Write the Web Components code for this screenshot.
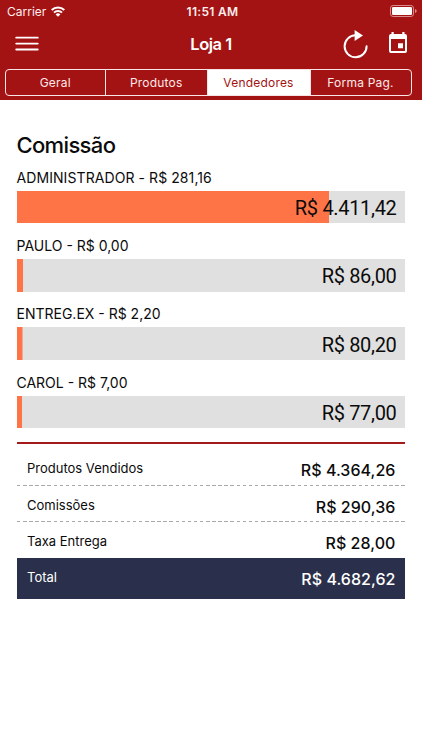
<!DOCTYPE html>
<html lang="pt-BR">
<head>
<meta charset="utf-8">
<title>Loja 1</title>
<style>
	body {
		margin: 0;
		background: #fff;
		color: #0b0b0b;
		font-family: Inter, "Liberation Sans", sans-serif;
	}

	main {
		padding: 31px 17px 0 16.5px;
	}

	h1 {
		margin: 0 0 6px;
		font-size: 22px;
		line-height: 28px;
		font-weight: 500;
		letter-spacing: -0.65px;
	}

	.wide {
		letter-spacing: 0.08px;
	}
</style>
</head>
<body>
<app-header>
	<status-bar carrier="Carrier" time="11:51 AM"></status-bar>
	<nav-bar>Loja 1</nav-bar>
	<segment-group>
		<segment-item>Geral</segment-item>
		<segment-item>Produtos</segment-item>
		<segment-item active>Vendedores</segment-item>
		<segment-item>Forma Pag.</segment-item>
	</segment-group>
</app-header>
<main>
	<h1>Comissão</h1>
	<seller-bar class="wide" value="R$ 4.411,42" fill="312px">ADMINISTRADOR - R$ 281,16</seller-bar>
	<seller-bar value="R$ 86,00" fill="6px">PAULO - R$ 0,00</seller-bar>
	<seller-bar value="R$ 80,20" fill="5.5px">ENTREG.EX - R$ 2,20</seller-bar>
	<seller-bar value="R$ 77,00" fill="5.2px">CAROL - R$ 7,00</seller-bar>
	<summary-list>
		<summary-row value="R$ 4.364,26">Produtos Vendidos</summary-row>
		<summary-row value="R$ 290,36">Comissões</summary-row>
		<summary-row value="R$ 28,00" plain>Taxa Entrega</summary-row>
		<summary-row value="R$ 4.682,62" total>Total</summary-row>
	</summary-list>
</main>

<script>
// red block on top that holds the status bar, the title and the tabs
class AppHeader extends HTMLElement {
	constructor() {
		super();
		this.attachShadow({ mode: 'open' });
		this.shadowRoot.innerHTML = `
		<style>
			:host {
				display: flex;
				flex-direction: column;
				box-sizing: border-box;
				height: 100px;
				background: #a41313;
				color: #fff;
			}
		</style>
		<slot></slot>
		`;
	}
}

class StatusBar extends HTMLElement {
	constructor() {
		super();
		this.attachShadow({ mode: 'open' });
		this.shadowRoot.innerHTML = `
		<style>
			:host {
				display: grid;
				grid-template-columns: 1fr auto 1fr;
				align-items: center;
				height: 22px;
				padding: 0 4px 0 7px;
				font-size: 12px;
				color: #fbeeee;
			}
			.left {
				display: flex;
				align-items: center;
				gap: 5px;
			}
			.time {
				font-weight: 600;
				letter-spacing: 0.3px;
			}
			.battery {
				justify-self: end;
				margin-top: -1px;
			}
			svg {
				display: block;
			}
		</style>
		<div class="left">
			<span>${this.getAttribute('carrier')}</span>
			<svg width="14" height="11" viewBox="0 0 14 11" fill="none" stroke="#fff" stroke-width="2">
				<path d="M.7 4a9 9 0 0 1 12.6 0M3 6.6a5.8 5.8 0 0 1 8 0"/>
				<path d="M7 10.8 4.6 8.4a3.4 3.4 0 0 1 4.8 0z" fill="#fff" stroke="none"/>
			</svg>
		</div>
		<span class="time">${this.getAttribute('time')}</span>
		<svg class="battery" width="28" height="12" viewBox="0 0 28 12">
			<rect x=".5" y=".5" width="23" height="11" rx="2.6" fill="none" stroke="#d98c8c"/>
			<rect x="2" y="2" width="20" height="8" rx="1.2" fill="#fff"/>
			<path d="M25 4q1.7.5 1.7 2T25 8z" fill="#d98c8c"/>
		</svg>
		`;
	}
}

// title bar with the menu, refresh and calendar icons
class NavBar extends HTMLElement {
	constructor() {
		super();
		this.attachShadow({ mode: 'open' });
		this.shadowRoot.innerHTML = `
		<style>
			:host {
				display: grid;
				grid-template-columns: 1fr auto 1fr;
				align-items: center;
				height: 44px;
				padding: 0 15px;
			}
			.title {
				font-size: 16.5px;
				font-weight: 600;
				letter-spacing: -0.5px;
			}
			.actions {
				display: flex;
				align-items: center;
				justify-content: flex-end;
				gap: 20.6px;
			}
			.calendar {
				margin-top: -3px;
			}
			svg {
				display: block;
			}
		</style>
		<svg width="24" height="16" viewBox="0 0 24 16" stroke="#fff" stroke-width="1.8" stroke-linecap="round">
			<path d="M1.2 1.7h21.6M1.2 7.6h21.6M1.2 13.5h21.6"/>
		</svg>
		<span class="title"><slot></slot></span>
		<div class="actions">
			<svg width="26" height="30" viewBox="0 0 26 30" fill="none">
				<path d="M13.5 6.3A11 11 0 1 0 24.6 17.3" stroke="#fff" stroke-width="2" stroke-linecap="round"/>
				<path d="M12.6 1v11L21 6.5z" fill="#fff"/>
			</svg>
			<svg class="calendar" width="18" height="21" viewBox="0 0 18 21">
				<path fill="#fff" fill-rule="evenodd" d="M2.5 0h2.2v2h8.6V0h2.2v2h.5a2 2 0 0 1 2 2v15a2 2 0 0 1-2 2H2a2 2 0 0 1-2-2V4a2 2 0 0 1 2-2h.5zM2 7v12h14V7zM9 11.2h5v5H9z"/>
			</svg>
		</div>
		`;
	}
}

class SegmentGroup extends HTMLElement {
	constructor() {
		super();
		this.attachShadow({ mode: 'open' });
		this.shadowRoot.innerHTML = `
		<style>
			:host {
				display: grid;
				grid-template-columns: 99.5px 101.5px 103px 1fr;
				box-sizing: border-box;
				height: 27px;
				margin: 3px 10.5px 0 4.5px;
				border: 1px solid #f8e4e4;
				border-radius: 4px;
				overflow: hidden;
			}
		</style>
		<slot></slot>
		`;
	}
}

class SegmentItem extends HTMLElement {
	constructor() {
		super();
		this.attachShadow({ mode: 'open' });
		this.shadowRoot.innerHTML = `
		<style>
			:host {
				display: flex;
				align-items: center;
				justify-content: center;
				font-size: 12px;
				letter-spacing: 0.2px;
				color: #fbe9e9;
				border-left: 1px solid #f8e4e4;
			}
			:host(:first-child) {
				border-left: none;
			}
			:host([active]) {
				background: #fff;
				color: #a41313;
			}
		</style>
		<slot></slot>
		`;
	}
}

// seller name and commission, with the sold value over a bar
class SellerBar extends HTMLElement {
	constructor() {
		super();
		this.attachShadow({ mode: 'open' });
		this.shadowRoot.innerHTML = `
		<style>
			:host {
				display: block;
				height: 68.2px;
			}
			.name {
				height: 26px;
				line-height: 25px;
				font-size: 14px;
			}
			.bar {
				display: flex;
				align-items: center;
				justify-content: flex-end;
				height: 32.4px;
				padding-right: 8.5px;
				background: linear-gradient(#ff7446, #ff7446) no-repeat #e0e0e0;
				background-size: ${this.getAttribute('fill')} 100%;
				font-family: Roboto, sans-serif;
				font-size: 20px;
				letter-spacing: -0.32px;
			}
			.bar span {
				padding-top: 2px;
			}
		</style>
		<div class="name"><slot></slot></div>
		<div class="bar"><span>${this.getAttribute('value')}</span></div>
		`;
	}
}

class SummaryList extends HTMLElement {
	constructor() {
		super();
		this.attachShadow({ mode: 'open' });
		this.shadowRoot.innerHTML = `
		<style>
			:host {
				display: block;
				margin-top: 4px;
				border-top: 2px solid #a31a1a;
				padding-top: 5.4px;
			}
		</style>
		<slot></slot>
		`;
	}
}

class SummaryRow extends HTMLElement {
	constructor() {
		super();
		this.attachShadow({ mode: 'open' });
		this.shadowRoot.innerHTML = `
		<style>
			:host {
				display: flex;
				justify-content: space-between;
				box-sizing: border-box;
				height: 36.5px;
				padding: 0 9.6px 0 10.5px;
				background: repeating-linear-gradient(90deg, #a9a9a9 0 3.5px, transparent 3.5px 6.1px) no-repeat 0 100% / 100% 1px;
			}
			:host([plain]) {
				height: 36px;
				background: none;
			}
			:host([total]) {
				height: 41px;
				background: #2a304b;
				color: #fff;
			}
			.label {
				font-size: 13px;
				line-height: 38px;
			}
			.value {
				font-size: 16px;
				line-height: 42px;
				font-weight: 500;
				letter-spacing: 0.03px;
			}
		</style>
		<span class="label"><slot></slot></span>
		<span class="value">${this.getAttribute('value')}</span>
		`;
	}
}

customElements.define('app-header', AppHeader);
customElements.define('status-bar', StatusBar);
customElements.define('nav-bar', NavBar);
customElements.define('segment-group', SegmentGroup);
customElements.define('segment-item', SegmentItem);
customElements.define('seller-bar', SellerBar);
customElements.define('summary-list', SummaryList);
customElements.define('summary-row', SummaryRow);
</script>
</body>
</html>
